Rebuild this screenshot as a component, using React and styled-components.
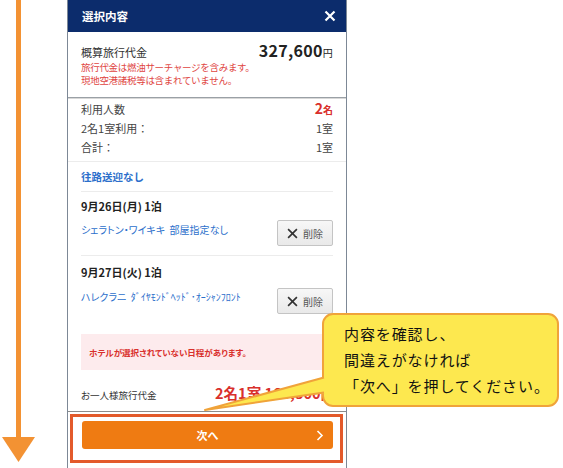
import React from "react";
import styled, { createGlobalStyle } from "styled-components";

const GlobalStyle = createGlobalStyle`
  html, body {
    margin: 0;
    padding: 0;
    background: #fff;
  }
  body {
    font-family: "Noto Sans CJK JP", "Noto Sans", sans-serif;
    color: #333;
  }
  #root {
    height: 468px;
    overflow: hidden;
  }
`;

const Page = styled.div`
  position: relative;
  display: flex;
  height: 468px;
  width: 563px;
  overflow: hidden;
`;

const ArrowCol = styled.div`
  width: 67px;
  flex: none;
`;

const Panel = styled.div`
  width: 278px;
  flex: none;
  border-left: 1px solid #7d8896;
  border-right: 1px solid #7d8896;
  display: flex;
  flex-direction: column;
  background: #fff;
`;

const Header = styled.div`
  height: 32px;
  flex: none;
  background: #0c2c6c;
  color: #fff;
  display: flex;
  align-items: center;
  justify-content: space-between;
  padding: 0 10px 0 14px;
  font-size: 11.5px;
  font-weight: bold;
`;

const PriceBlock = styled.div`
  padding: 7px 13px 0 13px;
  height: 58px;
  flex: none;
  border-bottom: 1px solid #9aa0a6;
  box-shadow: 0 1px 0 #d8d8d8;
`;

const Row = styled.div`
  display: flex;
  justify-content: space-between;
  align-items: baseline;
  height: ${(p) => p.h || 19}px;
  line-height: ${(p) => p.h || 19}px;
  font-size: ${(p) => p.size || 11}px;
`;

const Price = styled.span`
  font-size: 16px;
  font-weight: bold;
  color: #222;
  letter-spacing: 0.3px;
  & small {
    font-size: 10px;
    font-weight: normal;
  }
`;

const Note = styled.div`
  color: #e0453f;
  font-size: 9.5px;
  line-height: 12.5px;
  letter-spacing: -0.3px;
`;

const Counts = styled.div`
  padding: 1px 13px 4px 13px;
  border-bottom: 1px solid #ececec;
  color: #444;
`;

const RedCount = styled.span`
  color: #d9302c;
  font-weight: bold;
  font-size: 14px;
  & small {
    font-size: 10px;
  }
`;

const Section = styled.div`
  margin: 0 13px 0 13px;
  padding: ${(p) => p.pad || "0"};
  border-bottom: ${(p) => (p.line ? "1px solid #ececec" : "none")};
`;

const BlueBold = styled.div`
  color: #2c6fcb;
  font-weight: bold;
  font-size: 10.5px;
  height: 29px;
  line-height: 30px;
`;

const DayTitle = styled.div`
  font-weight: bold;
  font-size: 11px;
  color: #222;
  line-height: 16px;
`;

const HotelRow = styled.div`
  display: flex;
  justify-content: space-between;
  align-items: flex-start;
`;

const HotelName = styled.div`
  color: #2c6fcb;
  font-size: 10px;
  font-feature-settings: "palt";
  margin-top: ${(p) => p.mt || 0}px;
`;

const DeleteButton = styled.button`
  width: 56px;
  height: 26px;
  border: 1px solid #c4c4c4;
  border-radius: 2px;
  background: linear-gradient(#f7f7f7, #e9e9e9);
  display: flex;
  align-items: center;
  justify-content: center;
  gap: 5px;
  font-family: inherit;
  font-size: 10px;
  color: #555;
  padding: 0;
  margin-top: ${(p) => p.mt || 0}px;
  & svg {
    width: 11px;
    height: 11px;
  }
`;

const Warning = styled.div`
  margin: 20px 13px 0 13px;
  height: 36px;
  flex: none;
  background: #fdebed;
  color: #d9302c;
  font-size: 8.5px;
  font-weight: bold;
  font-feature-settings: "palt";
  display: flex;
  align-items: center;
  padding-left: 8px;
`;

const PerPerson = styled.div`
  display: flex;
  align-items: baseline;
  justify-content: space-between;
  padding: 12px 11px 0 13px;
  height: 29px;
  flex: none;
  font-size: 9.5px;
  color: #333;
  & > span:first-child {
    font-feature-settings: "palt";
  }
`;

const BigRed = styled.span`
  color: #d9302c;
  font-weight: bold;
  font-size: 14.5px;
`;

const Footer = styled.div`
  border-top: 1px solid #8c8c8c;
  padding: 2px 3px 0 2px;
  flex: none;
`;

const Highlight = styled.div`
  border: 3px solid #e35a2b;
  height: 39px;
  padding: 4px 7px 0 9px;
`;

const NextButton = styled.button`
  width: 100%;
  height: 28px;
  border: none;
  border-radius: 3px;
  background: #ef7b12;
  color: #fff;
  font-family: inherit;
  font-size: 11px;
  font-weight: bold;
  position: relative;
  display: flex;
  align-items: center;
  justify-content: center;
  & svg {
    position: absolute;
    right: 9px;
    top: 9px;
  }
`;

const Callout = styled.div`
  position: absolute;
  left: 322px;
  top: 313px;
  width: 213px;
  height: 84px;
  background: #fde84f;
  border: 2px solid #f0a33a;
  border-radius: 11px;
  padding: 6px 0 0 20px;
  font-size: 15px;
  line-height: 26px;
  color: #111;
  letter-spacing: 0.9px;
`;

const Tail = styled.svg`
  position: absolute;
  left: 200px;
  top: 370px;
`;

const Close = () => (
  <svg width="12" height="12" viewBox="0 0 12 12">
    <path d="M1.5 1.5L10.5 10.5M10.5 1.5L1.5 10.5" stroke="#fff" strokeWidth="2.2" />
  </svg>
);

const Cross = () => (
  <svg viewBox="0 0 10 10">
    <path d="M1 1L9 9M9 1L1 9" stroke="#333" strokeWidth="1.5" />
  </svg>
);

export default function App() {
  return (
    <>
      <GlobalStyle />
      <Page>
        <ArrowCol>
          <svg width="67" height="468" viewBox="0 0 67 468">
            <rect x="16" y="0" width="5" height="440" fill="#f39233" />
            <polygon points="2,437 35,437 18.5,462" fill="#f39233" />
          </svg>
        </ArrowCol>
        <Panel>
          <Header>
            <span>選択内容</span>
            <Close />
          </Header>
          <PriceBlock>
            <Row h={22} size={11}>
              <span>概算旅行代金</span>
              <Price>
                327,600<small>円</small>
              </Price>
            </Row>
            <Note>旅行代金は燃油サーチャージを含みます。</Note>
            <Note>現地空港諸税等は含まれていません。</Note>
          </PriceBlock>
          <Counts>
            <Row h={19}>
              <span>利用人数</span>
              <RedCount>
                2<small>名</small>
              </RedCount>
            </Row>
            <Row h={20}>
              <span>2名1室利用：</span>
              <span>1室</span>
            </Row>
            <Row h={19}>
              <span>合計：</span>
              <span>1室</span>
            </Row>
          </Counts>
          <Section line>
            <BlueBold>往路送迎なし</BlueBold>
          </Section>
          <Section line pad="6px 0 9px 0">
            <DayTitle>9月26日(月) 1泊</DayTitle>
            <HotelRow>
              <HotelName mt={8}>シェラトン・ワイキキ&nbsp;&nbsp;部屋指定なし</HotelName>
              <DeleteButton mt={6}>
                <Cross />
                削除
              </DeleteButton>
            </HotelRow>
          </Section>
          <Section pad="8px 0 0 0">
            <DayTitle>9月27日(火) 1泊</DayTitle>
            <HotelRow>
              <HotelName mt={9}>ハレクラニ&nbsp;&nbsp;ﾀﾞｲﾔﾓﾝﾄﾞﾍｯﾄﾞ･ｵｰｼｬﾝﾌﾛﾝﾄ</HotelName>
              <DeleteButton mt={8}>
                <Cross />
                削除
              </DeleteButton>
            </HotelRow>
          </Section>
          <Warning>ホテルが選択されていない日程があります。</Warning>
          <PerPerson>
            <span>お一人様旅行代金</span>
            <BigRed>2名1室 163,800円</BigRed>
          </PerPerson>
          <Footer>
            <Highlight>
              <NextButton>
                次へ
                <svg width="8" height="11" viewBox="0 0 8 11">
                  <path d="M1.5 1L6 5.5L1.5 10" fill="none" stroke="#fff" strokeWidth="1.6" />
                </svg>
              </NextButton>
            </Highlight>
          </Footer>
        </Panel>
        <Callout>
          内容を確認し、
          <br />
          間違えがなければ
          <br />
          「次へ」を押してください。
        </Callout>
        <Tail width="130" height="45" viewBox="0 0 130 45">
          <polygon points="5,40 126,7 126,23" fill="#fde84f" />
          <path d="M124,7.5 L5,40 L124,22.5" fill="none" stroke="#f0a33a" strokeWidth="2" strokeLinejoin="round" />
        </Tail>
      </Page>
    </>
  );
}
